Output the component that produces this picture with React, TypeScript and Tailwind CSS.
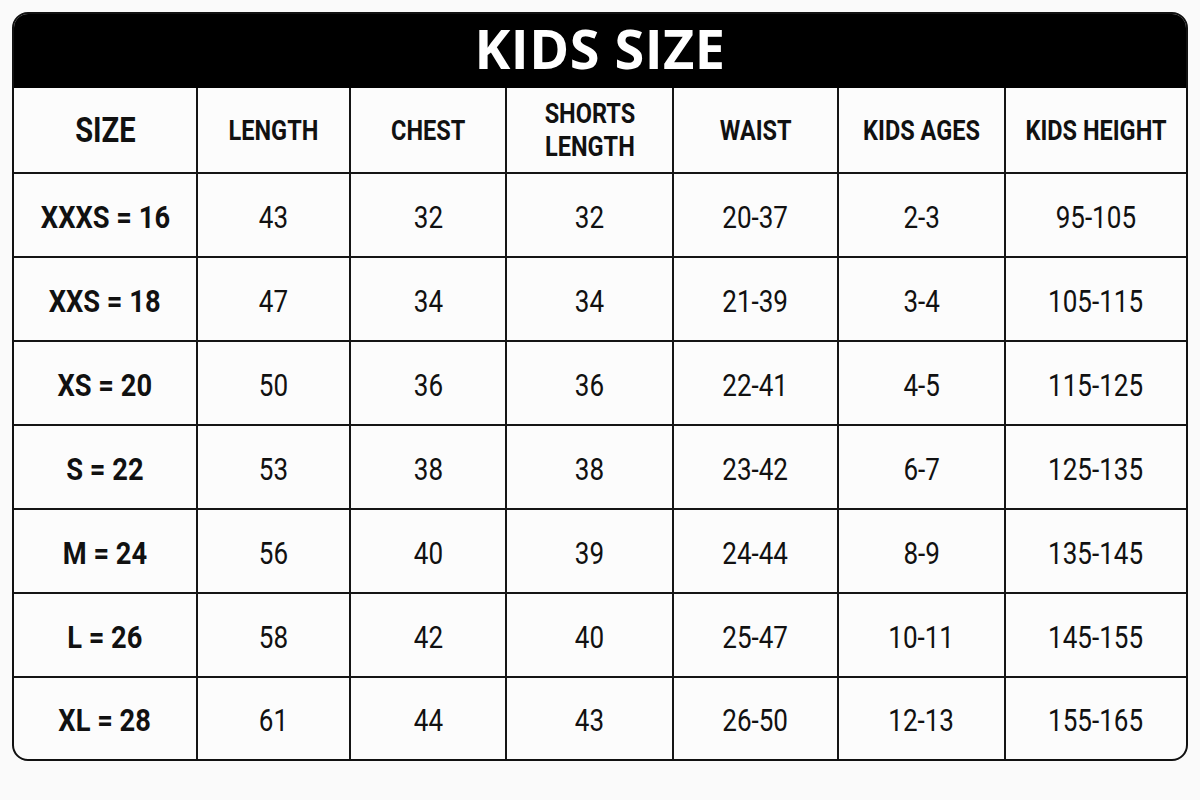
import React from 'react';

const HEADERS = ['LENGTH', 'CHEST', 'SHORTS|LENGTH', 'WAIST', 'KIDS AGES', 'KIDS HEIGHT'];

const ROWS: string[][] = [
  ['XXXS = 16', '43', '32', '32', '20-37', '2-3', '95-105'],
  ['XXS = 18', '47', '34', '34', '21-39', '3-4', '105-115'],
  ['XS = 20', '50', '36', '36', '22-41', '4-5', '115-125'],
  ['S = 22', '53', '38', '38', '23-42', '6-7', '125-135'],
  ['M = 24', '56', '40', '39', '24-44', '8-9', '135-145'],
  ['L = 26', '58', '42', '40', '25-47', '10-11', '145-155'],
  ['XL = 28', '61', '44', '43', '26-50', '12-13', '155-165'],
];

const bodyFont = "font-['Roboto','Liberation_Sans',sans-serif]";

function Cell({ children, lastCol, lastRow }: { children: React.ReactNode; lastCol: boolean; lastRow: boolean }) {
  return (
    <div
      className={
        'flex items-center justify-center text-center text-[#111] border-[#151515] ' +
        (lastCol ? '' : 'border-r-2 ') +
        (lastRow ? '' : 'border-b-2')
      }
    >
      {children}
    </div>
  );
}

export default function App() {
  return (
    <div className="w-[1200px] h-[800px] bg-[#fafafa] pt-[12px] pl-[12px]">
      <div className="w-[1176px] h-[749px] flex flex-col rounded-[16px] border-2 border-[#111] overflow-hidden bg-[#fcfcfc]">
        {/* title bar */}
        <div className="h-[74px] bg-black flex items-center justify-center shrink-0">
          <span className="font-['Open_Sans',sans-serif] font-bold text-white text-[54px] leading-none tracking-[0.5px] -mt-[6px]">
            KIDS SIZE
          </span>
        </div>

        <div className={'flex-1 grid grid-cols-[184px_153px_156px_167px_165px_167px_1fr] grid-rows-[86px_repeat(6,84px)_1fr] ' + bodyFont}>
          {/* header row */}
          <Cell lastCol={false} lastRow={false}>
            <span className="inline-block scale-x-[0.83] font-bold text-[35px] leading-none">SIZE</span>
          </Cell>
          {HEADERS.map((h, i) => (
            <Cell key={h} lastCol={i === HEADERS.length - 1} lastRow={false}>
              <span className="inline-block scale-x-[0.84] font-bold text-[28px] leading-[33px] whitespace-nowrap">
                {h.split('|').map((part) => (
                  <div key={part}>{part}</div>
                ))}
              </span>
            </Cell>
          ))}

          {/* data rows */}
          {ROWS.map((row, r) =>
            row.map((val, c) => (
              <Cell key={r + '-' + c} lastCol={c === row.length - 1} lastRow={r === ROWS.length - 1}>
                {c === 0 ? (
                  <span className="inline-block scale-x-[0.88] font-bold text-[31px] leading-none whitespace-nowrap mt-[4px]">{val}</span>
                ) : (
                  <span className="inline-block scale-x-[0.84] font-normal text-[31px] leading-none whitespace-nowrap mt-[4px]">{val}</span>
                )}
              </Cell>
            )),
          )}
        </div>
      </div>
    </div>
  );
}
